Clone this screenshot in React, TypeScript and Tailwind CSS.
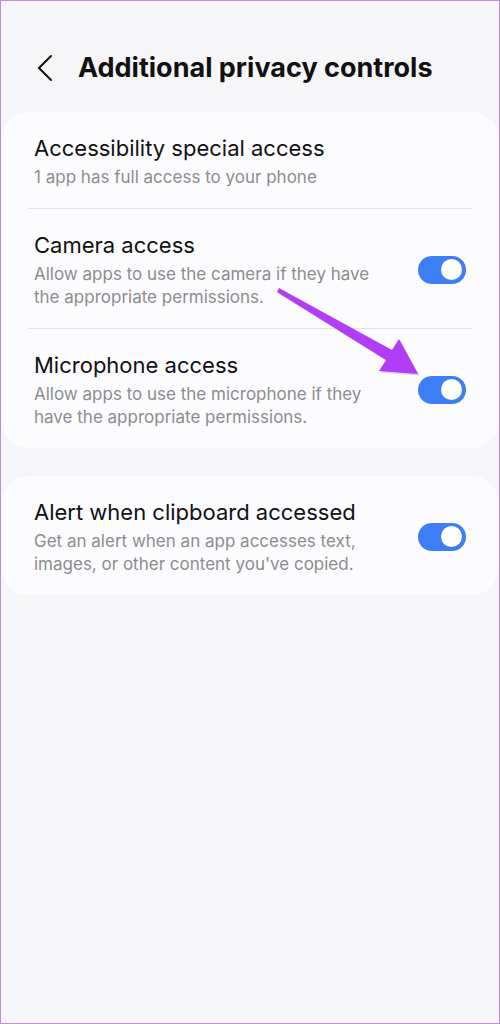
type RowProps = {
  title: string;
  subtitle: string;
  toggle?: boolean;
  divider?: boolean;
};

function Toggle() {
  return (
    <div className="flex h-[28px] w-[48px] shrink-0 items-center justify-end rounded-full bg-[#3d7ef6] pr-[4px]">
      <div className="h-[21px] w-[21px] rounded-full bg-white" />
    </div>
  );
}

function Row({ title, subtitle, toggle, divider }: RowProps) {
  return (
    <div>
      {divider ? <div className="mx-[26px] h-px bg-[#e3e3e6]" /> : null}
      <div className="flex items-center gap-[24px] pl-[32px] pr-[32px] pt-[21px] pb-[19px]">
        <div className="flex-1">
          <p className="text-[22px] leading-[30px] text-[#111111]">{title}</p>
          <p className="mt-[3px] text-[17px] leading-[23px] text-[#8c8c8e]">
            {subtitle}
          </p>
        </div>
        {toggle ? <Toggle /> : null}
      </div>
    </div>
  );
}

export default function App() {
  return (
    <div
      className="relative min-h-[1024px] border border-[#b98de8] bg-[#f6f6f8]"
      style={{ fontFamily: "Inter, 'Noto Sans', sans-serif" }}
    >
      <div className="flex h-[111px] items-start pl-[35px] pt-[52px]">
        <svg width="18" height="28" viewBox="0 0 18 28" className="mt-[1px]">
          <path
            d="M15 2 L3 14 L15 26"
            fill="none"
            stroke="#111"
            strokeWidth="2"
            strokeLinecap="round"
            strokeLinejoin="round"
          />
        </svg>
        <h1 className="ml-[24px] text-[27px] font-bold leading-[30px] text-[#111111]">
          Additional privacy controls
        </h1>
      </div>

      <div className="mx-[1px] rounded-[26px] bg-[#fcfcfe]">
        <Row
          title="Accessibility special access"
          subtitle="1 app has full access to your phone"
        />
        <Row
          title="Camera access"
          subtitle="Allow apps to use the camera if they have the appropriate permissions."
          toggle
          divider
        />
        <Row
          title="Microphone access"
          subtitle="Allow apps to use the microphone if they have the appropriate permissions."
          toggle
          divider
        />
      </div>

      <div className="mx-[1px] mt-[28px] rounded-[26px] bg-[#fcfcfe]">
        <Row
          title="Alert when clipboard accessed"
          subtitle="Get an alert when an app accesses text, images, or other content you've copied."
          toggle
        />
      </div>

      {/* annotation arrow */}
      <svg
        className="pointer-events-none absolute left-0 top-0"
        width="500"
        height="1024"
        viewBox="0 0 500 1024"
      >
        <polygon
          points="278,287 391,349 398,338 417,373 378,370 385,359 276,291"
          fill="#7a4a8a"
          opacity="0.25"
          transform="translate(1.5,1.5)"
        />
        <polygon
          points="278,287 391,349 398,338 417,373 378,370 385,359 276,291"
          fill="#b13ef6"
        />
      </svg>
    </div>
  );
}
